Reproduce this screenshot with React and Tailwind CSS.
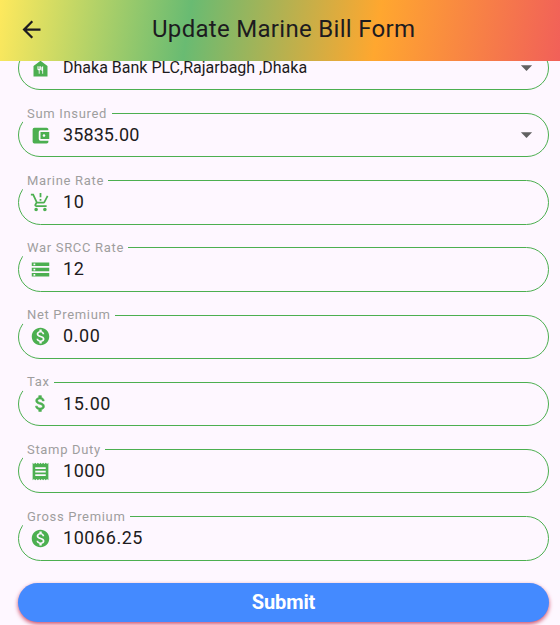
import {
  MdArrowBack,
  MdArrowDropDown,
  MdFoodBank,
  MdAccountBalanceWallet,
  MdProductionQuantityLimits,
  MdStorage,
  MdMonetizationOn,
  MdReceipt,
} from 'react-icons/md';

function DollarIcon({ className }) {
  return (
    <svg viewBox="0 0 24 24" fill="currentColor" stroke="currentColor" strokeWidth="0.7" className={className}>
      <path d="M11.8 10.9c-2.27-.59-3-1.2-3-2.15 0-1.09 1.01-1.85 2.7-1.85 1.78 0 2.44.85 2.5 2.1h2.21c-.07-1.72-1.12-3.3-3.21-3.81V3h-3v2.16c-1.94.42-3.5 1.68-3.5 3.61 0 2.31 1.91 3.46 4.7 4.13 2.5.6 3 1.48 3 2.41 0 .69-.49 1.79-2.7 1.79-2.06 0-2.87-.92-2.98-2.1h-2.2c.12 2.19 1.76 3.42 3.68 3.83V21h3v-2.15c1.95-.37 3.5-1.5 3.5-3.55 0-2.84-2.43-3.81-4.7-4.4z" />
    </svg>
  );
}

const fields = [
  { label: 'Bank Name', value: 'Dhaka Bank PLC,Rajarbagh ,Dhaka', icon: MdFoodBank, select: true, text: 'text-[16px]', gap: 'w-[80px]' },
  { label: 'Sum Insured', value: '35835.00', icon: MdAccountBalanceWallet, select: true, text: 'text-[18px] tracking-[0.1px] pb-[1.2px]', gap: 'w-[89px]' },
  { label: 'Marine Rate', value: '10', icon: MdProductionQuantityLimits, text: 'text-[18px] tracking-[0.56px] pb-[1.2px]', gap: 'w-[85px]' },
  { label: 'War SRCC Rate', value: '12', icon: MdStorage, text: 'text-[18px] tracking-[0.56px] pb-[1.2px]', gap: 'w-[105px]' },
  { label: 'Net Premium', value: '0.00', icon: MdMonetizationOn, text: 'text-[18px] tracking-[0.56px] pb-[2px]', gap: 'w-[92px]' },
  { label: 'Tax', value: '15.00', icon: DollarIcon, text: 'text-[18px] tracking-[0.56px]', gap: 'w-[31px]' },
  { label: 'Stamp Duty', value: '1000', icon: MdReceipt, text: 'text-[18px] tracking-[0.56px] pb-[1.2px]', gap: 'w-[82px]' },
  { label: 'Gross Premium', value: '10066.25', icon: MdMonetizationOn, text: 'text-[18px] tracking-[0.56px] pb-[1.2px]', gap: 'w-[107px]' },
];

function Field({ label, value, icon: Icon, select, text, gap }) {
  return (
    <div className="relative mb-[22.8px] flex h-[44.4px] shrink-0 items-center rounded-full border border-[#4caf50] pl-[11px] pr-[8px]">
      <span className={`absolute -top-[10.4px] left-[4px] h-[19px] whitespace-nowrap bg-[#fef7ff] pl-[4px] text-[13px] leading-[19px] tracking-[0.68px] text-[#9e9e9e] ${gap}`}>
        {label}
      </span>
      <Icon className="size-[21px] shrink-0 text-[#4caf50]" />
      <span className={`ml-[12px] flex-1 whitespace-nowrap text-[#1d1b20] ${text}`}>{value}</span>
      {select && <MdArrowDropDown className="mb-[1.6px] size-[27px] text-[#616161]" />}
    </div>
  );
}

export default function App() {
  return (
    <div className="flex h-[625px] w-[560px] flex-col overflow-hidden bg-[#fef7ff] font-['Roboto',sans-serif]">
      <header className="z-10 flex h-[61px] shrink-0 items-center bg-[linear-gradient(98.5deg,#fee95d,#69bb72_33.7%,#ffa72f_67.1%,#f16059)] pb-[2px] pl-[18px] text-[#1d1b20]">
        <MdArrowBack className="size-[27px]" />
        <h1 className="ml-[107px] whitespace-nowrap pb-[2px] text-[24px] leading-[32px] tracking-[0.3px]">Update Marine Bill Form</h1>
      </header>
      <main className="-mt-[15.2px] flex flex-col pl-[18px] pr-[11px]">
        {fields.map((f) => (
          <Field key={f.label} {...f} />
        ))}
        <button className="h-[38.4px] shrink-0 rounded-full bg-[#448aff] pb-[2px] text-[20px] font-bold tracking-[-0.1px] text-white shadow-[0_2px_4px_#d0506a]">
          Submit
        </button>
      </main>
    </div>
  );
}
